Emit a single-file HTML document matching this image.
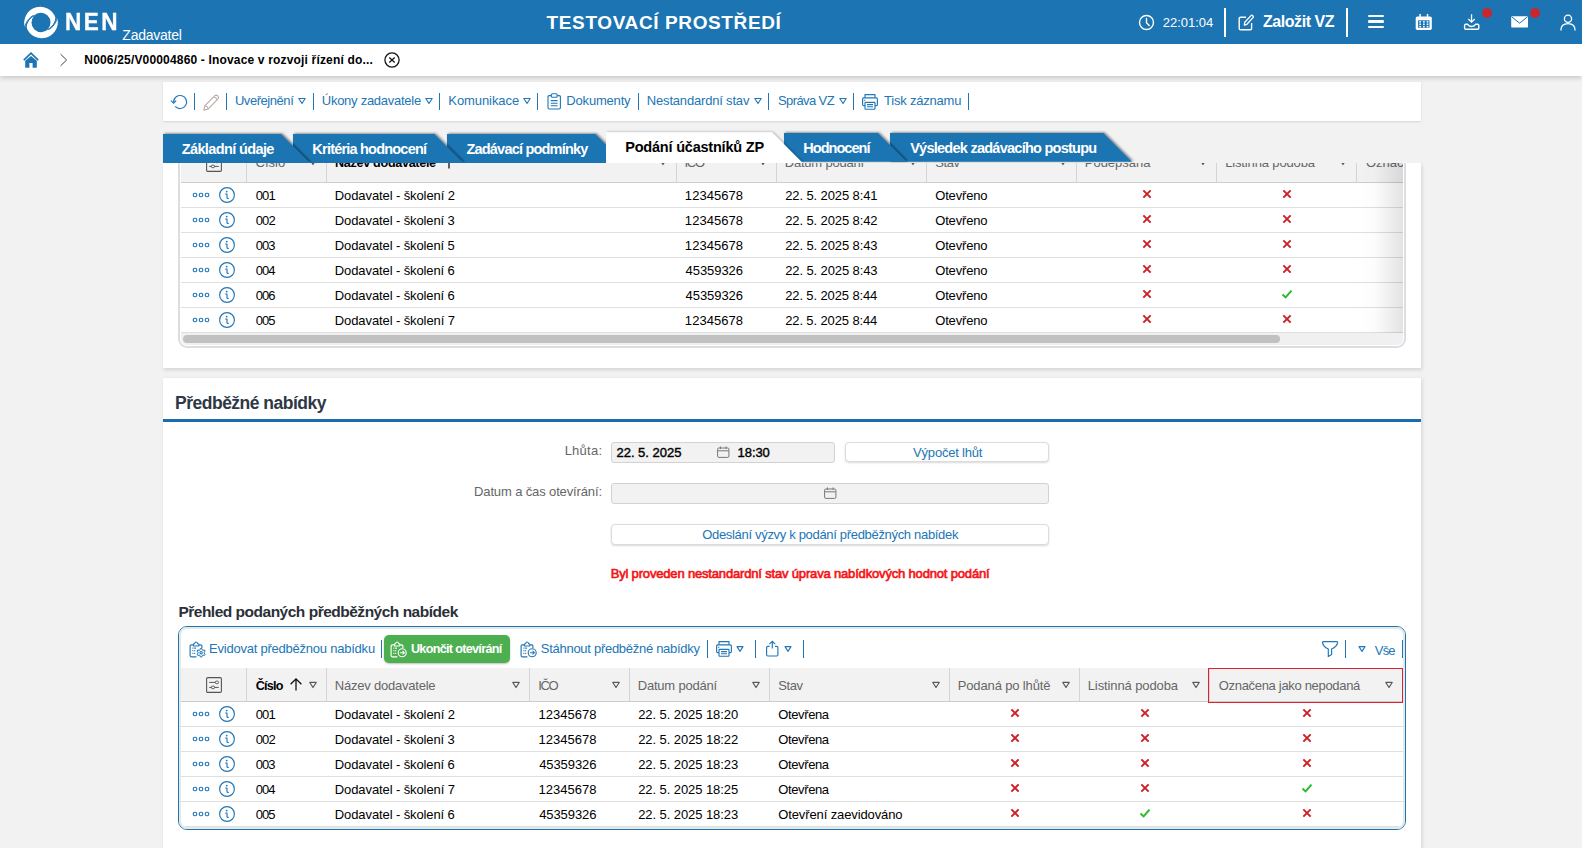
<!DOCTYPE html><html lang="cs"><head><meta charset="utf-8"><title>NEN - Zadavatel</title><style>html,body{margin:0;padding:0}body{width:1582px;height:848px;overflow:hidden;position:relative;background:#f2f2f2;font-family:"Liberation Sans", sans-serif;}
.t{position:absolute;white-space:pre;line-height:20px;}svg{overflow:visible}</style></head><body><div style="position:absolute;left:163px;top:163px;width:1258px;height:205px;background:#fff;box-shadow:1px 2px 4px rgba(0,0,0,.13);"></div>
<div style="position:absolute;left:178.2px;top:140px;width:1227.8px;height:208px;border:2.8px solid #dadde1;border-radius:9px;box-sizing:border-box;"></div>
<div style="position:absolute;left:181px;top:142px;width:1222px;height:203px;overflow:hidden;border-radius:0 0 6px 6px;"><div style="position:absolute;left:-181px;top:-142px;width:1582px;height:848px;"><div style="position:absolute;left:181px;top:146px;width:1222px;height:36px;background:#f2f2f2;"></div>
<div style="position:absolute;left:181px;top:182px;width:1222px;height:1px;background:#cdcdcd;"></div>
<div style="position:absolute;left:246px;top:146px;width:1px;height:36px;background:#d4d4d4;"></div>
<div style="position:absolute;left:326px;top:146px;width:1px;height:36px;background:#d4d4d4;"></div>
<div style="position:absolute;left:676px;top:146px;width:1px;height:36px;background:#d4d4d4;"></div>
<div style="position:absolute;left:776px;top:146px;width:1px;height:36px;background:#d4d4d4;"></div>
<div style="position:absolute;left:926px;top:146px;width:1px;height:36px;background:#d4d4d4;"></div>
<div style="position:absolute;left:1076px;top:146px;width:1px;height:36px;background:#d4d4d4;"></div>
<div style="position:absolute;left:1216px;top:146px;width:1px;height:36px;background:#d4d4d4;"></div>
<div style="position:absolute;left:1356px;top:146px;width:1px;height:36px;background:#d4d4d4;"></div>
<svg style="position:absolute;left:206px;top:156.4px;" width="16" height="16" viewBox="0 0 16 16"><rect x="0.6" y="0.6" width="14.8" height="14.8" rx="1.2" fill="none" stroke="#555" stroke-width="1.1"/><path d="M3.2 5.4 H9.3 M3.2 10.4 H5.6 M8.4 10.4 H12.8" stroke="#555" stroke-width="1" fill="none"/><ellipse cx="10.9" cy="5.4" rx="1.7" ry="1.4" fill="none" stroke="#555" stroke-width="0.9"/><ellipse cx="7" cy="10.4" rx="1.7" ry="1.4" fill="none" stroke="#555" stroke-width="0.9"/></svg>
<span class="t " style="left:255.57px;top:152px;line-height:21px;font-size:13px;color:#666;">Číslo</span>
<svg style="position:absolute;left:308px;top:157.4px;" width="10" height="10" viewBox="0 0 10 10"><path d="M1.80 2.45 L8.20 2.45 L5 7.55 Z" fill="none" stroke="#5a5a5a" stroke-width="1.2" stroke-linejoin="round"/></svg>
<span class="t " style="left:335.09px;top:153px;line-height:20px;font-size:12.6px;font-weight:700;letter-spacing:-0.310px;">Název dodavatele</span>
<svg style="position:absolute;left:658px;top:157.4px;" width="10" height="10" viewBox="0 0 10 10"><path d="M1.80 2.45 L8.20 2.45 L5 7.55 Z" fill="none" stroke="#5a5a5a" stroke-width="1.2" stroke-linejoin="round"/></svg>
<svg style="position:absolute;left:442.7px;top:155.5px;" width="12" height="13" viewBox="0 0 12 13"><path d="M6 12.5 V1 M0.6 6.3 L6 0.9 L11.4 6.3" fill="none" stroke="#111" stroke-width="1.3"/></svg>
<span class="t " style="left:684.61px;top:152px;line-height:21px;font-size:13px;color:#666;letter-spacing:-1.356px;">IČO</span>
<svg style="position:absolute;left:758px;top:157.4px;" width="10" height="10" viewBox="0 0 10 10"><path d="M1.80 2.45 L8.20 2.45 L5 7.55 Z" fill="none" stroke="#5a5a5a" stroke-width="1.2" stroke-linejoin="round"/></svg>
<span class="t " style="left:784.74px;top:152px;line-height:21px;font-size:13px;color:#666;letter-spacing:-0.206px;">Datum podání</span>
<svg style="position:absolute;left:908px;top:157.4px;" width="10" height="10" viewBox="0 0 10 10"><path d="M1.80 2.45 L8.20 2.45 L5 7.55 Z" fill="none" stroke="#5a5a5a" stroke-width="1.2" stroke-linejoin="round"/></svg>
<span class="t " style="left:935.24px;top:152px;line-height:21px;font-size:13px;color:#666;letter-spacing:-0.446px;">Stav</span>
<svg style="position:absolute;left:1058px;top:157.4px;" width="10" height="10" viewBox="0 0 10 10"><path d="M1.80 2.45 L8.20 2.45 L5 7.55 Z" fill="none" stroke="#5a5a5a" stroke-width="1.2" stroke-linejoin="round"/></svg>
<span class="t " style="left:1084.74px;top:152px;line-height:21px;font-size:13px;color:#666;">Podepsaná</span>
<svg style="position:absolute;left:1198px;top:157.4px;" width="10" height="10" viewBox="0 0 10 10"><path d="M1.80 2.45 L8.20 2.45 L5 7.55 Z" fill="none" stroke="#5a5a5a" stroke-width="1.2" stroke-linejoin="round"/></svg>
<span class="t " style="left:1225.14px;top:152px;line-height:21px;font-size:13px;color:#666;letter-spacing:-0.139px;">Listinná podoba</span>
<svg style="position:absolute;left:1338px;top:157.4px;" width="10" height="10" viewBox="0 0 10 10"><path d="M1.80 2.45 L8.20 2.45 L5 7.55 Z" fill="none" stroke="#5a5a5a" stroke-width="1.2" stroke-linejoin="round"/></svg>
<span class="t " style="left:1365.94px;top:152px;line-height:21px;font-size:13px;color:#666;">Označena jako nepodaná</span>
<div style="position:absolute;left:181px;top:207px;width:1222px;height:1px;background:#dfdfdf;"></div>
<svg style="position:absolute;left:191px;top:190.2px;" width="20" height="10" viewBox="0 0 20 10"><rect x="2.25" y="3.25" width="3.5" height="3.5" rx="1.5" fill="none" stroke="#2176b6" stroke-width="1.15"/><rect x="8.25" y="3.25" width="3.5" height="3.5" rx="1.5" fill="none" stroke="#2176b6" stroke-width="1.15"/><rect x="14.25" y="3.25" width="3.5" height="3.5" rx="1.5" fill="none" stroke="#2176b6" stroke-width="1.15"/></svg>
<svg style="position:absolute;left:218px;top:186.2px;" width="18" height="18" viewBox="0 0 18 18"><circle cx="9" cy="9" r="7.4" fill="none" stroke="#2176b6" stroke-width="1.15"/><circle cx="8.7" cy="5.6" r="0.9" fill="#2176b6"/><path d="M7.6 8 L9 8 L9 11.6 Q9 12.6 10.3 12.4" fill="none" stroke="#2176b6" stroke-width="1.15" stroke-linecap="round" stroke-linejoin="round"/></svg>
<span class="t " style="left:255.70px;top:185px;line-height:21px;font-size:13px;letter-spacing:-0.881px;">001</span>
<span class="t " style="left:334.84px;top:185px;line-height:21px;font-size:13px;letter-spacing:-0.102px;">Dodavatel - školení 2</span>
<span class="t " style="left:684.86px;top:185px;line-height:21px;font-size:13px;letter-spacing:0.046px;">12345678</span>
<span class="t " style="left:785.17px;top:185px;line-height:21px;font-size:13px;letter-spacing:-0.103px;">22. 5. 2025 8:41</span>
<span class="t " style="left:935.24px;top:185px;line-height:21px;font-size:13px;letter-spacing:-0.168px;">Otevřeno</span>
<svg style="position:absolute;left:1142.3px;top:189.2px;" width="10" height="10" viewBox="0 0 10 10"><path d="M1.35 1.35 L8.65 8.65 M8.65 1.35 L1.35 8.65" stroke="#cc2229" stroke-width="2" fill="none"/></svg>
<svg style="position:absolute;left:1282.4px;top:189.2px;" width="10" height="10" viewBox="0 0 10 10"><path d="M1.35 1.35 L8.65 8.65 M8.65 1.35 L1.35 8.65" stroke="#cc2229" stroke-width="2" fill="none"/></svg>
<div style="position:absolute;left:181px;top:232px;width:1222px;height:1px;background:#dfdfdf;"></div>
<svg style="position:absolute;left:191px;top:215.2px;" width="20" height="10" viewBox="0 0 20 10"><rect x="2.25" y="3.25" width="3.5" height="3.5" rx="1.5" fill="none" stroke="#2176b6" stroke-width="1.15"/><rect x="8.25" y="3.25" width="3.5" height="3.5" rx="1.5" fill="none" stroke="#2176b6" stroke-width="1.15"/><rect x="14.25" y="3.25" width="3.5" height="3.5" rx="1.5" fill="none" stroke="#2176b6" stroke-width="1.15"/></svg>
<svg style="position:absolute;left:218px;top:211.2px;" width="18" height="18" viewBox="0 0 18 18"><circle cx="9" cy="9" r="7.4" fill="none" stroke="#2176b6" stroke-width="1.15"/><circle cx="8.7" cy="5.6" r="0.9" fill="#2176b6"/><path d="M7.6 8 L9 8 L9 11.6 Q9 12.6 10.3 12.4" fill="none" stroke="#2176b6" stroke-width="1.15" stroke-linecap="round" stroke-linejoin="round"/></svg>
<span class="t " style="left:255.70px;top:210px;line-height:21px;font-size:13px;letter-spacing:-0.881px;">002</span>
<span class="t " style="left:334.84px;top:210px;line-height:21px;font-size:13px;letter-spacing:-0.105px;">Dodavatel - školení 3</span>
<span class="t " style="left:684.86px;top:210px;line-height:21px;font-size:13px;letter-spacing:0.046px;">12345678</span>
<span class="t " style="left:785.17px;top:210px;line-height:21px;font-size:13px;letter-spacing:-0.103px;">22. 5. 2025 8:42</span>
<span class="t " style="left:935.24px;top:210px;line-height:21px;font-size:13px;letter-spacing:-0.168px;">Otevřeno</span>
<svg style="position:absolute;left:1142.3px;top:214.2px;" width="10" height="10" viewBox="0 0 10 10"><path d="M1.35 1.35 L8.65 8.65 M8.65 1.35 L1.35 8.65" stroke="#cc2229" stroke-width="2" fill="none"/></svg>
<svg style="position:absolute;left:1282.4px;top:214.2px;" width="10" height="10" viewBox="0 0 10 10"><path d="M1.35 1.35 L8.65 8.65 M8.65 1.35 L1.35 8.65" stroke="#cc2229" stroke-width="2" fill="none"/></svg>
<div style="position:absolute;left:181px;top:257px;width:1222px;height:1px;background:#dfdfdf;"></div>
<svg style="position:absolute;left:191px;top:240.2px;" width="20" height="10" viewBox="0 0 20 10"><rect x="2.25" y="3.25" width="3.5" height="3.5" rx="1.5" fill="none" stroke="#2176b6" stroke-width="1.15"/><rect x="8.25" y="3.25" width="3.5" height="3.5" rx="1.5" fill="none" stroke="#2176b6" stroke-width="1.15"/><rect x="14.25" y="3.25" width="3.5" height="3.5" rx="1.5" fill="none" stroke="#2176b6" stroke-width="1.15"/></svg>
<svg style="position:absolute;left:218px;top:236.2px;" width="18" height="18" viewBox="0 0 18 18"><circle cx="9" cy="9" r="7.4" fill="none" stroke="#2176b6" stroke-width="1.15"/><circle cx="8.7" cy="5.6" r="0.9" fill="#2176b6"/><path d="M7.6 8 L9 8 L9 11.6 Q9 12.6 10.3 12.4" fill="none" stroke="#2176b6" stroke-width="1.15" stroke-linecap="round" stroke-linejoin="round"/></svg>
<span class="t " style="left:255.70px;top:235px;line-height:21px;font-size:13px;letter-spacing:-0.912px;">003</span>
<span class="t " style="left:334.84px;top:235px;line-height:21px;font-size:13px;letter-spacing:-0.105px;">Dodavatel - školení 5</span>
<span class="t " style="left:684.86px;top:235px;line-height:21px;font-size:13px;letter-spacing:0.046px;">12345678</span>
<span class="t " style="left:785.17px;top:235px;line-height:21px;font-size:13px;letter-spacing:-0.107px;">22. 5. 2025 8:43</span>
<span class="t " style="left:935.24px;top:235px;line-height:21px;font-size:13px;letter-spacing:-0.168px;">Otevřeno</span>
<svg style="position:absolute;left:1142.3px;top:239.2px;" width="10" height="10" viewBox="0 0 10 10"><path d="M1.35 1.35 L8.65 8.65 M8.65 1.35 L1.35 8.65" stroke="#cc2229" stroke-width="2" fill="none"/></svg>
<svg style="position:absolute;left:1282.4px;top:239.2px;" width="10" height="10" viewBox="0 0 10 10"><path d="M1.35 1.35 L8.65 8.65 M8.65 1.35 L1.35 8.65" stroke="#cc2229" stroke-width="2" fill="none"/></svg>
<div style="position:absolute;left:181px;top:282px;width:1222px;height:1px;background:#dfdfdf;"></div>
<svg style="position:absolute;left:191px;top:265.2px;" width="20" height="10" viewBox="0 0 20 10"><rect x="2.25" y="3.25" width="3.5" height="3.5" rx="1.5" fill="none" stroke="#2176b6" stroke-width="1.15"/><rect x="8.25" y="3.25" width="3.5" height="3.5" rx="1.5" fill="none" stroke="#2176b6" stroke-width="1.15"/><rect x="14.25" y="3.25" width="3.5" height="3.5" rx="1.5" fill="none" stroke="#2176b6" stroke-width="1.15"/></svg>
<svg style="position:absolute;left:218px;top:261.2px;" width="18" height="18" viewBox="0 0 18 18"><circle cx="9" cy="9" r="7.4" fill="none" stroke="#2176b6" stroke-width="1.15"/><circle cx="8.7" cy="5.6" r="0.9" fill="#2176b6"/><path d="M7.6 8 L9 8 L9 11.6 Q9 12.6 10.3 12.4" fill="none" stroke="#2176b6" stroke-width="1.15" stroke-linecap="round" stroke-linejoin="round"/></svg>
<span class="t " style="left:255.70px;top:260px;line-height:21px;font-size:13px;letter-spacing:-1.006px;">004</span>
<span class="t " style="left:334.84px;top:260px;line-height:21px;font-size:13px;letter-spacing:-0.105px;">Dodavatel - školení 6</span>
<span class="t " style="left:685.55px;top:260px;line-height:21px;font-size:13px;letter-spacing:-0.052px;">45359326</span>
<span class="t " style="left:785.17px;top:260px;line-height:21px;font-size:13px;letter-spacing:-0.107px;">22. 5. 2025 8:43</span>
<span class="t " style="left:935.24px;top:260px;line-height:21px;font-size:13px;letter-spacing:-0.168px;">Otevřeno</span>
<svg style="position:absolute;left:1142.3px;top:264.2px;" width="10" height="10" viewBox="0 0 10 10"><path d="M1.35 1.35 L8.65 8.65 M8.65 1.35 L1.35 8.65" stroke="#cc2229" stroke-width="2" fill="none"/></svg>
<svg style="position:absolute;left:1282.4px;top:264.2px;" width="10" height="10" viewBox="0 0 10 10"><path d="M1.35 1.35 L8.65 8.65 M8.65 1.35 L1.35 8.65" stroke="#cc2229" stroke-width="2" fill="none"/></svg>
<div style="position:absolute;left:181px;top:307px;width:1222px;height:1px;background:#dfdfdf;"></div>
<svg style="position:absolute;left:191px;top:290.2px;" width="20" height="10" viewBox="0 0 20 10"><rect x="2.25" y="3.25" width="3.5" height="3.5" rx="1.5" fill="none" stroke="#2176b6" stroke-width="1.15"/><rect x="8.25" y="3.25" width="3.5" height="3.5" rx="1.5" fill="none" stroke="#2176b6" stroke-width="1.15"/><rect x="14.25" y="3.25" width="3.5" height="3.5" rx="1.5" fill="none" stroke="#2176b6" stroke-width="1.15"/></svg>
<svg style="position:absolute;left:218px;top:286.2px;" width="18" height="18" viewBox="0 0 18 18"><circle cx="9" cy="9" r="7.4" fill="none" stroke="#2176b6" stroke-width="1.15"/><circle cx="8.7" cy="5.6" r="0.9" fill="#2176b6"/><path d="M7.6 8 L9 8 L9 11.6 Q9 12.6 10.3 12.4" fill="none" stroke="#2176b6" stroke-width="1.15" stroke-linecap="round" stroke-linejoin="round"/></svg>
<span class="t " style="left:255.70px;top:285px;line-height:21px;font-size:13px;letter-spacing:-0.912px;">006</span>
<span class="t " style="left:334.84px;top:285px;line-height:21px;font-size:13px;letter-spacing:-0.105px;">Dodavatel - školení 6</span>
<span class="t " style="left:685.55px;top:285px;line-height:21px;font-size:13px;letter-spacing:-0.052px;">45359326</span>
<span class="t " style="left:785.17px;top:285px;line-height:21px;font-size:13px;letter-spacing:-0.120px;">22. 5. 2025 8:44</span>
<span class="t " style="left:935.24px;top:285px;line-height:21px;font-size:13px;letter-spacing:-0.168px;">Otevřeno</span>
<svg style="position:absolute;left:1142.3px;top:289.2px;" width="10" height="10" viewBox="0 0 10 10"><path d="M1.35 1.35 L8.65 8.65 M8.65 1.35 L1.35 8.65" stroke="#cc2229" stroke-width="2" fill="none"/></svg>
<svg style="position:absolute;left:1281.4px;top:289.2px;" width="12" height="10" viewBox="0 0 12 10"><path d="M1.5 5.5 L4.6 8.4 L10.5 1.6" stroke="#2eb82e" stroke-width="2" fill="none"/></svg>
<div style="position:absolute;left:181px;top:332px;width:1222px;height:1px;background:#dfdfdf;"></div>
<svg style="position:absolute;left:191px;top:315.2px;" width="20" height="10" viewBox="0 0 20 10"><rect x="2.25" y="3.25" width="3.5" height="3.5" rx="1.5" fill="none" stroke="#2176b6" stroke-width="1.15"/><rect x="8.25" y="3.25" width="3.5" height="3.5" rx="1.5" fill="none" stroke="#2176b6" stroke-width="1.15"/><rect x="14.25" y="3.25" width="3.5" height="3.5" rx="1.5" fill="none" stroke="#2176b6" stroke-width="1.15"/></svg>
<svg style="position:absolute;left:218px;top:311.2px;" width="18" height="18" viewBox="0 0 18 18"><circle cx="9" cy="9" r="7.4" fill="none" stroke="#2176b6" stroke-width="1.15"/><circle cx="8.7" cy="5.6" r="0.9" fill="#2176b6"/><path d="M7.6 8 L9 8 L9 11.6 Q9 12.6 10.3 12.4" fill="none" stroke="#2176b6" stroke-width="1.15" stroke-linecap="round" stroke-linejoin="round"/></svg>
<span class="t " style="left:255.70px;top:310px;line-height:21px;font-size:13px;letter-spacing:-0.912px;">005</span>
<span class="t " style="left:334.84px;top:310px;line-height:21px;font-size:13px;letter-spacing:-0.102px;">Dodavatel - školení 7</span>
<span class="t " style="left:684.86px;top:310px;line-height:21px;font-size:13px;letter-spacing:0.046px;">12345678</span>
<span class="t " style="left:785.17px;top:310px;line-height:21px;font-size:13px;letter-spacing:-0.120px;">22. 5. 2025 8:44</span>
<span class="t " style="left:935.24px;top:310px;line-height:21px;font-size:13px;letter-spacing:-0.168px;">Otevřeno</span>
<svg style="position:absolute;left:1142.3px;top:314.2px;" width="10" height="10" viewBox="0 0 10 10"><path d="M1.35 1.35 L8.65 8.65 M8.65 1.35 L1.35 8.65" stroke="#cc2229" stroke-width="2" fill="none"/></svg>
<svg style="position:absolute;left:1282.4px;top:314.2px;" width="10" height="10" viewBox="0 0 10 10"><path d="M1.35 1.35 L8.65 8.65 M8.65 1.35 L1.35 8.65" stroke="#cc2229" stroke-width="2" fill="none"/></svg>
<div style="position:absolute;left:181px;top:333px;width:1222px;height:12px;background:#f0f0f0;"></div>
<div style="position:absolute;left:183px;top:335px;width:1096.6px;height:8px;background:#c1c1c1;border-radius:4px;"></div>
<div style="position:absolute;left:1355px;top:146px;width:48px;height:187px;background:linear-gradient(to right,rgba(0,0,0,0) 0%,rgba(0,0,0,0.012) 40%,rgba(0,0,0,0.11) 100%);"></div>
</div></div>
<div style="position:absolute;left:163px;top:123px;width:1258px;height:39.7px;background:#f2f2f2;"></div>
<svg style="position:absolute;left:0;top:120px;overflow:hidden" width="1582" height="43" viewBox="0 120 1582 43"><defs><filter id="ds" x="-5%" y="-20%" width="110%" height="140%"><feDropShadow dx="1.4" dy="-0.6" stdDeviation="1.3" flood-color="#000" flood-opacity="0.5"/></filter><filter id="ds2" x="-5%" y="-20%" width="110%" height="140%"><feDropShadow dx="1.2" dy="-0.4" stdDeviation="1.3" flood-color="#000" flood-opacity="0.28"/></filter></defs><polygon points="890,133 1103.3,133 1132.0,161.7 890,161.7" fill="#1c74b3" filter="url(#ds)"/><polygon points="784,133 877.9,133 906.6,161.7 784,161.7" fill="#1c74b3" filter="url(#ds)"/><polygon points="447,134 595.3,134 624.3,163 447,163" fill="#1c74b3" filter="url(#ds)"/><polygon points="293,134 434.4,134 463.4,163 293,163" fill="#1c74b3" filter="url(#ds)"/><polygon points="163,134 281.0,134 310.0,163 163,163" fill="#1c74b3" filter="url(#ds)"/><polygon points="606,132.3 772,132.3 802.7,163 606,163" fill="#fff" filter="url(#ds2)"/></svg>
<span class="t " style="left:181.73px;top:138px;line-height:22px;font-size:14.5px;font-weight:700;color:#fff;letter-spacing:-0.618px;">Základní údaje</span>
<span class="t " style="left:312.36px;top:138px;line-height:22px;font-size:14.5px;font-weight:700;color:#fff;letter-spacing:-0.792px;">Kritéria hodnocení</span>
<span class="t " style="left:466.43px;top:138px;line-height:22px;font-size:14.5px;font-weight:700;color:#fff;letter-spacing:-0.789px;">Zadávací podmínky</span>
<span class="t " style="left:625.26px;top:136px;line-height:22px;font-size:14.5px;font-weight:700;letter-spacing:-0.210px;">Podání účastníků ZP</span>
<span class="t " style="left:803.26px;top:137px;line-height:22px;font-size:14.5px;font-weight:700;color:#fff;letter-spacing:-0.959px;">Hodnocení</span>
<span class="t " style="left:910.14px;top:137px;line-height:22px;font-size:14.5px;font-weight:700;color:#fff;letter-spacing:-0.739px;">Výsledek zadávacího postupu</span>
<div style="position:absolute;left:163px;top:82px;width:1258px;height:39px;background:#fff;box-shadow:0 1px 2px rgba(0,0,0,.12);"></div>
<svg style="position:absolute;left:170px;top:93px;" width="18" height="18" viewBox="0 0 18 18"><path d="M3.6 9 A6.5 6.5 0 1 1 5.2 13.3" fill="none" stroke="#2176b6" stroke-width="1.2"/><path d="M1 7.6 L3.6 10.2 L6.2 7.6" fill="none" stroke="#2176b6" stroke-width="1.2"/></svg>
<svg style="position:absolute;left:202.5px;top:93.5px;" width="18" height="17" viewBox="0 0 18 17"><path d="M0.8 16.2 L2 11.6 L11.9 1.7 Q13.2 0.5 14.8 1.9 Q16.2 3.5 15 4.8 L5.3 14.9 Z M2 11.6 Q4.4 12.2 5.3 14.9 M10.9 2.7 Q13.4 3.4 14 6" fill="none" stroke="#b7aaa6" stroke-width="1.05" stroke-linejoin="round"/></svg>
<span class="t " style="left:234.90px;top:90px;line-height:21px;font-size:13px;color:#2176b6;letter-spacing:-0.446px;">Uveřejnění</span>
<svg style="position:absolute;left:297.1px;top:96.0px;" width="10" height="10" viewBox="0 0 10 10"><path d="M1.80 2.45 L8.20 2.45 L5 7.55 Z" fill="none" stroke="#2176b6" stroke-width="1.1" stroke-linejoin="round"/></svg>
<span class="t " style="left:321.80px;top:90px;line-height:21px;font-size:13px;color:#2176b6;letter-spacing:-0.267px;">Úkony zadavatele</span>
<svg style="position:absolute;left:423.9px;top:96.0px;" width="10" height="10" viewBox="0 0 10 10"><path d="M1.80 2.45 L8.20 2.45 L5 7.55 Z" fill="none" stroke="#2176b6" stroke-width="1.1" stroke-linejoin="round"/></svg>
<span class="t " style="left:448.34px;top:90px;line-height:21px;font-size:13px;color:#2176b6;letter-spacing:-0.082px;">Komunikace</span>
<svg style="position:absolute;left:521.7px;top:96.0px;" width="10" height="10" viewBox="0 0 10 10"><path d="M1.80 2.45 L8.20 2.45 L5 7.55 Z" fill="none" stroke="#2176b6" stroke-width="1.1" stroke-linejoin="round"/></svg>
<span class="t " style="left:566.34px;top:90px;line-height:21px;font-size:13px;color:#2176b6;letter-spacing:-0.186px;">Dokumenty</span>
<span class="t " style="left:646.84px;top:90px;line-height:21px;font-size:13px;color:#2176b6;letter-spacing:-0.184px;">Nestandardní stav</span>
<svg style="position:absolute;left:752.6px;top:96.0px;" width="10" height="10" viewBox="0 0 10 10"><path d="M1.80 2.45 L8.20 2.45 L5 7.55 Z" fill="none" stroke="#2176b6" stroke-width="1.1" stroke-linejoin="round"/></svg>
<span class="t " style="left:777.94px;top:90px;line-height:21px;font-size:13px;color:#2176b6;letter-spacing:-0.588px;">Správa VZ</span>
<svg style="position:absolute;left:837.7px;top:96.0px;" width="10" height="10" viewBox="0 0 10 10"><path d="M1.80 2.45 L8.20 2.45 L5 7.55 Z" fill="none" stroke="#2176b6" stroke-width="1.1" stroke-linejoin="round"/></svg>
<span class="t " style="left:883.95px;top:90px;line-height:21px;font-size:13px;color:#2176b6;letter-spacing:-0.202px;">Tisk záznamu</span>
<div style="position:absolute;left:193.9px;top:93px;width:1.4px;height:16.5px;background:#2176b6;"></div>
<div style="position:absolute;left:225.60000000000002px;top:93px;width:1.4px;height:16.5px;background:#2176b6;"></div>
<div style="position:absolute;left:312.7px;top:93px;width:1.4px;height:16.5px;background:#2176b6;"></div>
<div style="position:absolute;left:438.7px;top:93px;width:1.4px;height:16.5px;background:#2176b6;"></div>
<div style="position:absolute;left:536.9px;top:93px;width:1.4px;height:16.5px;background:#2176b6;"></div>
<div style="position:absolute;left:637.9px;top:93px;width:1.4px;height:16.5px;background:#2176b6;"></div>
<div style="position:absolute;left:767.9px;top:93px;width:1.4px;height:16.5px;background:#2176b6;"></div>
<div style="position:absolute;left:852.6999999999999px;top:93px;width:1.4px;height:16.5px;background:#2176b6;"></div>
<div style="position:absolute;left:967.9px;top:93px;width:1.4px;height:16.5px;background:#2176b6;"></div>
<svg style="position:absolute;left:547px;top:93px;" width="15" height="17" viewBox="0 0 15 17"><path d="M4.2 2.6 H2.2 Q1 2.6 1 3.8 V14.8 Q1 16 2.2 16 H12.2 Q13.4 16 13.4 14.8 V3.8 Q13.4 2.6 12.2 2.6 H10.2" fill="none" stroke="#2176b6" stroke-width="1.1"/><rect x="4.3" y="0.8" width="5.8" height="3.4" rx="1" fill="none" stroke="#2176b6" stroke-width="1.1"/><path d="M3.8 7.6 H10.6 M3.8 10.2 H10.6 M3.8 12.8 H10.6" stroke="#2176b6" stroke-width="1.1"/></svg>
<svg style="position:absolute;left:862.4px;top:93.6px;" width="16" height="16" viewBox="0 0 16 16"><path d="M3 3.8 V0.6 H13 V3.8" fill="none" stroke="#2176b6" stroke-width="1.15" stroke-linejoin="round"/><path d="M3 11.6 H1.8 Q0.6 11.6 0.6 10.4 V5 Q0.6 3.8 1.8 3.8 H14.2 Q15.4 3.8 15.4 5 V10.4 Q15.4 11.6 14.2 11.6 H13" fill="none" stroke="#2176b6" stroke-width="1.15"/><rect x="3" y="8.4" width="10" height="6.8" rx="0.6" fill="#fff" stroke="#2176b6" stroke-width="1.15"/><path d="M5 10.6 H11 M5 12.7 H11 M1.9 6.2 H3.3" stroke="#2176b6" stroke-width="1.05"/></svg>
<div style="position:absolute;left:163px;top:378px;width:1258px;height:480px;background:#fff;box-shadow:1px 1px 4px rgba(0,0,0,.13);"></div>
<span class="t " style="left:175.08px;top:390px;line-height:26px;font-size:17.5px;font-weight:700;color:#2e3846;letter-spacing:-0.507px;">Předběžné nabídky</span>
<div style="position:absolute;left:163px;top:419px;width:1258px;height:3px;background:#1a6eb0;"></div>
<span class="t " style="left:564.64px;top:440px;line-height:21px;font-size:13px;color:#666;letter-spacing:0.253px;">Lhůta:</span>
<div style="position:absolute;left:611px;top:442px;width:224px;height:21px;background:#f2f2f2;border:1px solid #d2d2d2;border-radius:3px;box-sizing:border-box;"></div>
<span class="t " style="left:616.47px;top:442px;line-height:21px;font-size:13px;letter-spacing:-0.007px;-webkit-text-stroke:0.4px #000;">22. 5. 2025</span>
<svg style="position:absolute;left:716.6px;top:446px;" width="12.5" height="12" viewBox="0 0 12.5 12"><rect x="0.6" y="2" width="11.3" height="9.4" rx="1.2" fill="none" stroke="#777" stroke-width="1"/><path d="M0.6 4.8 H11.9 M3.4 0.4 V3 M9.1 0.4 V3" stroke="#777" stroke-width="1" fill="none"/></svg>
<span class="t " style="left:737.56px;top:442px;line-height:21px;font-size:13px;letter-spacing:-0.056px;-webkit-text-stroke:0.4px #000;">18:30</span>
<div style="position:absolute;left:845px;top:442px;width:204px;height:20px;background:#fff;border:1px solid #dcdcdc;border-radius:4px;box-sizing:border-box;box-shadow:0 1px 2px rgba(0,0,0,.15);"></div>
<span class="t " style="left:913.10px;top:442px;line-height:21px;font-size:13px;color:#2176b6;letter-spacing:-0.200px;">Výpočet lhůt</span>
<span class="t " style="left:474.04px;top:481px;line-height:21px;font-size:13px;color:#666;letter-spacing:-0.132px;">Datum a čas otevírání:</span>
<div style="position:absolute;left:611px;top:483px;width:438px;height:21px;background:#f2f2f2;border:1px solid #d2d2d2;border-radius:3px;box-sizing:border-box;"></div>
<svg style="position:absolute;left:823.7px;top:487px;" width="12.5" height="12" viewBox="0 0 12.5 12"><rect x="0.6" y="2" width="11.3" height="9.4" rx="1.2" fill="none" stroke="#777" stroke-width="1"/><path d="M0.6 4.8 H11.9 M3.4 0.4 V3 M9.1 0.4 V3" stroke="#777" stroke-width="1" fill="none"/></svg>
<div style="position:absolute;left:611px;top:524px;width:438px;height:21px;background:#fff;border:1px solid #dcdcdc;border-radius:4px;box-sizing:border-box;box-shadow:0 1px 2px rgba(0,0,0,.15);"></div>
<span class="t " style="left:702.24px;top:524px;line-height:21px;font-size:13px;color:#2176b6;letter-spacing:-0.318px;">Odeslání výzvy k podání předběžných nabídek</span>
<span class="t " style="left:610.64px;top:563px;line-height:21px;font-size:13px;color:#f51414;letter-spacing:-0.170px;-webkit-text-stroke:0.65px #f51414;">Byl proveden nestandardní stav úprava nabídkových hodnot podání</span>
<span class="t " style="left:178.40px;top:600px;line-height:23px;font-size:15.5px;font-weight:700;color:#2a2f38;letter-spacing:-0.494px;">Přehled podaných předběžných nabídek</span>
<div style="position:absolute;left:178px;top:626px;width:1228px;height:204px;border:1px solid #1c74b3;border-radius:9px;box-sizing:border-box;"></div>
<div style="position:absolute;left:179px;top:627px;width:1226px;height:202px;border:2px solid #e6e8ea;border-radius:8px;box-sizing:border-box;"></div>
<svg style="position:absolute;left:188.5px;top:640.6px;" width="17" height="17" viewBox="0 0 17 17"><path d="M4.4 3.9 H2.3 Q1.1 3.9 1.1 5.1 V14.6 Q1.1 15.8 2.3 15.8 H7.4 M9.8 3.9 H11.7 Q12.9 3.9 12.9 5.1 V6.9" fill="none" stroke="#2176b6" stroke-width="1.15"/><path d="M4.4 5 V3.4 Q4.4 2.8 5 2.8 H5.6 Q5.9 1 7.1 1 Q8.3 1 8.6 2.8 H9.2 Q9.8 2.8 9.8 3.4 V5 Z" fill="none" stroke="#2176b6" stroke-width="1.05" stroke-linejoin="round"/><path d="M3.4 7 H4.4 M5.2 7 H7 M3.4 9.6 H4.4 M5.2 9.6 H6.2 M3.4 12.3 H4.4 M5.2 12.3 H6.2" stroke="#2176b6" stroke-width="1.25"/><path d="M13.18 8.90 L12.92 7.48 L11.28 7.48 L11.02 8.90 L10.21 9.37 L8.85 8.88 L8.03 10.30 L9.14 11.23 L9.14 12.17 L8.03 13.10 L8.85 14.52 L10.21 14.03 L11.02 14.50 L11.28 15.92 L12.92 15.92 L13.18 14.50 L13.99 14.03 L15.35 14.52 L16.17 13.10 L15.06 12.17 L15.06 11.23 L16.17 10.30 L15.35 8.88 L13.99 9.37 Z" fill="#fff" stroke="#2176b6" stroke-width="1" stroke-linejoin="round"/><circle cx="12.1" cy="11.7" r="1.15" fill="none" stroke="#2176b6" stroke-width="1.1"/></svg>
<span class="t " style="left:209.04px;top:638px;line-height:21px;font-size:13px;color:#2176b6;letter-spacing:-0.228px;">Evidovat předběžnou nabídku</span>
<div style="position:absolute;left:380.7px;top:640.4px;width:1.4px;height:17.600000000000023px;background:#2176b6;"></div>
<div style="position:absolute;left:383.7px;top:635.3px;width:126.3px;height:27.5px;background:#4caf50;border-radius:5px;box-shadow:0 1px 2px rgba(0,0,0,.25);"></div>
<svg style="position:absolute;left:390.2px;top:640.6px;" width="17" height="17" viewBox="0 0 17 17"><path d="M4.4 3.9 H2.3 Q1.1 3.9 1.1 5.1 V14.6 Q1.1 15.8 2.3 15.8 H7.4 M9.8 3.9 H11.7 Q12.9 3.9 12.9 5.1 V6.9" fill="none" stroke="#fff" stroke-width="1.15"/><path d="M4.4 5 V3.4 Q4.4 2.8 5 2.8 H5.6 Q5.9 1 7.1 1 Q8.3 1 8.6 2.8 H9.2 Q9.8 2.8 9.8 3.4 V5 Z" fill="none" stroke="#fff" stroke-width="1.05" stroke-linejoin="round"/><path d="M3.4 7 H4.4 M5.2 7 H7 M3.4 9.6 H4.4 M5.2 9.6 H6.2 M3.4 12.3 H4.4 M5.2 12.3 H6.2" stroke="#fff" stroke-width="1.25"/><circle cx="12.2" cy="11.7" r="4" fill="#4caf50" stroke="#fff" stroke-width="1.1"/><path d="M10 11.7 H14.2 M12.6 9.9 L14.4 11.7 L12.6 13.5" fill="none" stroke="#fff" stroke-width="1.05"/></svg>
<span class="t " style="left:410.95px;top:639px;line-height:20px;font-size:12.6px;font-weight:700;color:#fff;letter-spacing:-0.679px;">Ukončit otevírání</span>
<svg style="position:absolute;left:519.6px;top:640.6px;" width="17" height="17" viewBox="0 0 17 17"><path d="M4.4 3.9 H2.3 Q1.1 3.9 1.1 5.1 V14.6 Q1.1 15.8 2.3 15.8 H7.4 M9.8 3.9 H11.7 Q12.9 3.9 12.9 5.1 V6.9" fill="none" stroke="#2176b6" stroke-width="1.15"/><path d="M4.4 5 V3.4 Q4.4 2.8 5 2.8 H5.6 Q5.9 1 7.1 1 Q8.3 1 8.6 2.8 H9.2 Q9.8 2.8 9.8 3.4 V5 Z" fill="none" stroke="#2176b6" stroke-width="1.05" stroke-linejoin="round"/><path d="M3.4 7 H4.4 M5.2 7 H7 M3.4 9.6 H4.4 M5.2 9.6 H6.2 M3.4 12.3 H4.4 M5.2 12.3 H6.2" stroke="#2176b6" stroke-width="1.25"/><circle cx="12.2" cy="11.7" r="4" fill="#fff" stroke="#2176b6" stroke-width="1.1"/><path d="M10 11.7 H14.2 M12.6 9.9 L14.4 11.7 L12.6 13.5" fill="none" stroke="#2176b6" stroke-width="1.05"/></svg>
<span class="t " style="left:540.84px;top:638px;line-height:21px;font-size:13px;color:#2176b6;letter-spacing:-0.283px;">Stáhnout předběžné nabídky</span>
<div style="position:absolute;left:706.8px;top:640px;width:1.4px;height:18px;background:#2176b6;"></div>
<svg style="position:absolute;left:716.3px;top:641.1px;" width="16" height="16" viewBox="0 0 16 16"><path d="M3 3.8 V0.6 H13 V3.8" fill="none" stroke="#2176b6" stroke-width="1.15" stroke-linejoin="round"/><path d="M3 11.6 H1.8 Q0.6 11.6 0.6 10.4 V5 Q0.6 3.8 1.8 3.8 H14.2 Q15.4 3.8 15.4 5 V10.4 Q15.4 11.6 14.2 11.6 H13" fill="none" stroke="#2176b6" stroke-width="1.15"/><rect x="3" y="8.4" width="10" height="6.8" rx="0.6" fill="#fff" stroke="#2176b6" stroke-width="1.15"/><path d="M5 10.6 H11 M5 12.7 H11 M1.9 6.2 H3.3" stroke="#2176b6" stroke-width="1.05"/></svg>
<svg style="position:absolute;left:735px;top:644.1px;" width="10" height="10" viewBox="0 0 10 10"><path d="M1.99 2.60 L8.01 2.60 L5 7.40 Z" fill="none" stroke="#2176b6" stroke-width="1.1" stroke-linejoin="round"/></svg>
<div style="position:absolute;left:754.8px;top:640px;width:1.4px;height:18px;background:#2176b6;"></div>
<svg style="position:absolute;left:766.1px;top:641.3px;" width="12.5" height="15.6" viewBox="0 0 12.5 15.6"><path d="M3.6 5.4 H1.8 Q0.6 5.4 0.6 6.6 V13.8 Q0.6 15 1.8 15 H10.7 Q11.9 15 11.9 13.8 V6.6 Q11.9 5.4 10.7 5.4 H8.9" fill="none" stroke="#2176b6" stroke-width="1.15"/><path d="M6.3 7.6 V0.7 M3.4 3.2 L6.3 0.4 L9.2 3.2" fill="none" stroke="#2176b6" stroke-width="1.15"/></svg>
<svg style="position:absolute;left:782.8px;top:644.1px;" width="10" height="10" viewBox="0 0 10 10"><path d="M1.99 2.60 L8.01 2.60 L5 7.40 Z" fill="none" stroke="#2176b6" stroke-width="1.1" stroke-linejoin="round"/></svg>
<div style="position:absolute;left:802.6999999999999px;top:640px;width:1.4px;height:18px;background:#2176b6;"></div>
<svg style="position:absolute;left:1321.8px;top:640.9px;" width="17" height="17" viewBox="0 0 17 17"><path d="M1.2 0.6 H15 Q15.8 0.6 15.7 1.4 Q15 5.6 9.6 8 V13.6 L6.3 15.6 V8 Q1 5.6 0.5 1.4 Q0.4 0.6 1.2 0.6 Z" fill="none" stroke="#2176b6" stroke-width="1.15" stroke-linejoin="round"/></svg>
<div style="position:absolute;left:1344.8px;top:640.2px;width:1.4px;height:17.59999999999991px;background:#2176b6;"></div>
<svg style="position:absolute;left:1356.8px;top:644px;" width="10" height="10" viewBox="0 0 10 10"><path d="M1.99 2.60 L8.01 2.60 L5 7.40 Z" fill="none" stroke="#2176b6" stroke-width="1.1" stroke-linejoin="round"/></svg>
<span class="t " style="left:1374.80px;top:640px;line-height:21px;font-size:13px;color:#2176b6;letter-spacing:-0.837px;">Vše</span>
<div style="position:absolute;left:1401.8000000000002px;top:640.2px;width:1.2px;height:17.59999999999991px;background:#2176b6;"></div>
<div style="position:absolute;left:181px;top:629px;width:1222px;height:198px;overflow:hidden;border-radius:6px;"><div style="position:absolute;left:-181px;top:-629px;width:1582px;height:848px;"><div style="position:absolute;left:181px;top:668.3px;width:1222px;height:32.7px;background:#f2f2f2;"></div>
<div style="position:absolute;left:181px;top:701.0px;width:1222px;height:1px;background:#cdcdcd;"></div>
<div style="position:absolute;left:246px;top:668.3px;width:1px;height:32.7px;background:#d4d4d4;"></div>
<div style="position:absolute;left:326px;top:668.3px;width:1px;height:32.7px;background:#d4d4d4;"></div>
<div style="position:absolute;left:529px;top:668.3px;width:1px;height:32.7px;background:#d4d4d4;"></div>
<div style="position:absolute;left:629px;top:668.3px;width:1px;height:32.7px;background:#d4d4d4;"></div>
<div style="position:absolute;left:769px;top:668.3px;width:1px;height:32.7px;background:#d4d4d4;"></div>
<div style="position:absolute;left:949px;top:668.3px;width:1px;height:32.7px;background:#d4d4d4;"></div>
<div style="position:absolute;left:1079px;top:668.3px;width:1px;height:32.7px;background:#d4d4d4;"></div>
<div style="position:absolute;left:1209px;top:668.3px;width:1px;height:32.7px;background:#d4d4d4;"></div>
<svg style="position:absolute;left:206px;top:677.3px;" width="16" height="16" viewBox="0 0 16 16"><rect x="0.6" y="0.6" width="14.8" height="14.8" rx="1.2" fill="none" stroke="#555" stroke-width="1.1"/><path d="M3.2 5.4 H9.3 M3.2 10.4 H5.6 M8.4 10.4 H12.8" stroke="#555" stroke-width="1" fill="none"/><ellipse cx="10.9" cy="5.4" rx="1.7" ry="1.4" fill="none" stroke="#555" stroke-width="0.9"/><ellipse cx="7" cy="10.4" rx="1.7" ry="1.4" fill="none" stroke="#555" stroke-width="0.9"/></svg>
<span class="t " style="left:255.70px;top:676px;line-height:20px;font-size:12.6px;font-weight:700;letter-spacing:-0.744px;">Číslo</span>
<svg style="position:absolute;left:308px;top:680.2px;" width="10" height="10" viewBox="0 0 10 10"><path d="M1.80 2.45 L8.20 2.45 L5 7.55 Z" fill="none" stroke="#5a5a5a" stroke-width="1.2" stroke-linejoin="round"/></svg>
<svg style="position:absolute;left:289.7px;top:678.4000000000001px;" width="12" height="13" viewBox="0 0 12 13"><path d="M6 12.5 V1 M0.6 6.3 L6 0.9 L11.4 6.3" fill="none" stroke="#111" stroke-width="1.3"/></svg>
<span class="t " style="left:334.84px;top:675px;line-height:21px;font-size:13px;color:#666;letter-spacing:-0.220px;">Název dodavatele</span>
<svg style="position:absolute;left:511px;top:680.2px;" width="10" height="10" viewBox="0 0 10 10"><path d="M1.80 2.45 L8.20 2.45 L5 7.55 Z" fill="none" stroke="#5a5a5a" stroke-width="1.2" stroke-linejoin="round"/></svg>
<span class="t " style="left:538.21px;top:675px;line-height:21px;font-size:13px;color:#666;letter-spacing:-1.356px;">IČO</span>
<svg style="position:absolute;left:611px;top:680.2px;" width="10" height="10" viewBox="0 0 10 10"><path d="M1.80 2.45 L8.20 2.45 L5 7.55 Z" fill="none" stroke="#5a5a5a" stroke-width="1.2" stroke-linejoin="round"/></svg>
<span class="t " style="left:637.74px;top:675px;line-height:21px;font-size:13px;color:#666;letter-spacing:-0.206px;">Datum podání</span>
<svg style="position:absolute;left:751px;top:680.2px;" width="10" height="10" viewBox="0 0 10 10"><path d="M1.80 2.45 L8.20 2.45 L5 7.55 Z" fill="none" stroke="#5a5a5a" stroke-width="1.2" stroke-linejoin="round"/></svg>
<span class="t " style="left:778.24px;top:675px;line-height:21px;font-size:13px;color:#666;letter-spacing:-0.446px;">Stav</span>
<svg style="position:absolute;left:931px;top:680.2px;" width="10" height="10" viewBox="0 0 10 10"><path d="M1.80 2.45 L8.20 2.45 L5 7.55 Z" fill="none" stroke="#5a5a5a" stroke-width="1.2" stroke-linejoin="round"/></svg>
<span class="t " style="left:957.74px;top:675px;line-height:21px;font-size:13px;color:#666;letter-spacing:-0.137px;">Podaná po lhůtě</span>
<svg style="position:absolute;left:1061px;top:680.2px;" width="10" height="10" viewBox="0 0 10 10"><path d="M1.80 2.45 L8.20 2.45 L5 7.55 Z" fill="none" stroke="#5a5a5a" stroke-width="1.2" stroke-linejoin="round"/></svg>
<span class="t " style="left:1087.74px;top:675px;line-height:21px;font-size:13px;color:#666;letter-spacing:-0.111px;">Listinná podoba</span>
<svg style="position:absolute;left:1191px;top:680.2px;" width="10" height="10" viewBox="0 0 10 10"><path d="M1.80 2.45 L8.20 2.45 L5 7.55 Z" fill="none" stroke="#5a5a5a" stroke-width="1.2" stroke-linejoin="round"/></svg>
<span class="t " style="left:1218.84px;top:675px;line-height:21px;font-size:13px;color:#666;letter-spacing:-0.320px;">Označena jako nepodaná</span>
<svg style="position:absolute;left:1384px;top:680.2px;" width="10" height="10" viewBox="0 0 10 10"><path d="M1.80 2.45 L8.20 2.45 L5 7.55 Z" fill="none" stroke="#5a5a5a" stroke-width="1.2" stroke-linejoin="round"/></svg>
<div style="position:absolute;left:181px;top:726px;width:1222px;height:1px;background:#dfdfdf;"></div>
<svg style="position:absolute;left:191px;top:709.2px;" width="20" height="10" viewBox="0 0 20 10"><rect x="2.25" y="3.25" width="3.5" height="3.5" rx="1.5" fill="none" stroke="#2176b6" stroke-width="1.15"/><rect x="8.25" y="3.25" width="3.5" height="3.5" rx="1.5" fill="none" stroke="#2176b6" stroke-width="1.15"/><rect x="14.25" y="3.25" width="3.5" height="3.5" rx="1.5" fill="none" stroke="#2176b6" stroke-width="1.15"/></svg>
<svg style="position:absolute;left:218px;top:705.2px;" width="18" height="18" viewBox="0 0 18 18"><circle cx="9" cy="9" r="7.4" fill="none" stroke="#2176b6" stroke-width="1.15"/><circle cx="8.7" cy="5.6" r="0.9" fill="#2176b6"/><path d="M7.6 8 L9 8 L9 11.6 Q9 12.6 10.3 12.4" fill="none" stroke="#2176b6" stroke-width="1.15" stroke-linecap="round" stroke-linejoin="round"/></svg>
<span class="t " style="left:255.70px;top:704px;line-height:21px;font-size:13px;letter-spacing:-0.881px;">001</span>
<span class="t " style="left:334.84px;top:704px;line-height:21px;font-size:13px;letter-spacing:-0.102px;">Dodavatel - školení 2</span>
<span class="t " style="left:538.46px;top:704px;line-height:21px;font-size:13px;letter-spacing:0.018px;">12345678</span>
<span class="t " style="left:638.17px;top:704px;line-height:21px;font-size:13px;letter-spacing:-0.077px;">22. 5. 2025 18:20</span>
<span class="t " style="left:778.24px;top:704px;line-height:21px;font-size:13px;letter-spacing:-0.377px;">Otevřena</span>
<svg style="position:absolute;left:1010.1px;top:708.2px;" width="10" height="10" viewBox="0 0 10 10"><path d="M1.35 1.35 L8.65 8.65 M8.65 1.35 L1.35 8.65" stroke="#cc2229" stroke-width="2" fill="none"/></svg>
<svg style="position:absolute;left:1140.2px;top:708.2px;" width="10" height="10" viewBox="0 0 10 10"><path d="M1.35 1.35 L8.65 8.65 M8.65 1.35 L1.35 8.65" stroke="#cc2229" stroke-width="2" fill="none"/></svg>
<svg style="position:absolute;left:1301.9px;top:708.2px;" width="10" height="10" viewBox="0 0 10 10"><path d="M1.35 1.35 L8.65 8.65 M8.65 1.35 L1.35 8.65" stroke="#cc2229" stroke-width="2" fill="none"/></svg>
<div style="position:absolute;left:181px;top:751px;width:1222px;height:1px;background:#dfdfdf;"></div>
<svg style="position:absolute;left:191px;top:734.2px;" width="20" height="10" viewBox="0 0 20 10"><rect x="2.25" y="3.25" width="3.5" height="3.5" rx="1.5" fill="none" stroke="#2176b6" stroke-width="1.15"/><rect x="8.25" y="3.25" width="3.5" height="3.5" rx="1.5" fill="none" stroke="#2176b6" stroke-width="1.15"/><rect x="14.25" y="3.25" width="3.5" height="3.5" rx="1.5" fill="none" stroke="#2176b6" stroke-width="1.15"/></svg>
<svg style="position:absolute;left:218px;top:730.2px;" width="18" height="18" viewBox="0 0 18 18"><circle cx="9" cy="9" r="7.4" fill="none" stroke="#2176b6" stroke-width="1.15"/><circle cx="8.7" cy="5.6" r="0.9" fill="#2176b6"/><path d="M7.6 8 L9 8 L9 11.6 Q9 12.6 10.3 12.4" fill="none" stroke="#2176b6" stroke-width="1.15" stroke-linecap="round" stroke-linejoin="round"/></svg>
<span class="t " style="left:255.70px;top:729px;line-height:21px;font-size:13px;letter-spacing:-0.881px;">002</span>
<span class="t " style="left:334.84px;top:729px;line-height:21px;font-size:13px;letter-spacing:-0.105px;">Dodavatel - školení 3</span>
<span class="t " style="left:538.46px;top:729px;line-height:21px;font-size:13px;letter-spacing:0.018px;">12345678</span>
<span class="t " style="left:638.17px;top:729px;line-height:21px;font-size:13px;letter-spacing:-0.069px;">22. 5. 2025 18:22</span>
<span class="t " style="left:778.24px;top:729px;line-height:21px;font-size:13px;letter-spacing:-0.377px;">Otevřena</span>
<svg style="position:absolute;left:1010.1px;top:733.2px;" width="10" height="10" viewBox="0 0 10 10"><path d="M1.35 1.35 L8.65 8.65 M8.65 1.35 L1.35 8.65" stroke="#cc2229" stroke-width="2" fill="none"/></svg>
<svg style="position:absolute;left:1140.2px;top:733.2px;" width="10" height="10" viewBox="0 0 10 10"><path d="M1.35 1.35 L8.65 8.65 M8.65 1.35 L1.35 8.65" stroke="#cc2229" stroke-width="2" fill="none"/></svg>
<svg style="position:absolute;left:1301.9px;top:733.2px;" width="10" height="10" viewBox="0 0 10 10"><path d="M1.35 1.35 L8.65 8.65 M8.65 1.35 L1.35 8.65" stroke="#cc2229" stroke-width="2" fill="none"/></svg>
<div style="position:absolute;left:181px;top:776px;width:1222px;height:1px;background:#dfdfdf;"></div>
<svg style="position:absolute;left:191px;top:759.2px;" width="20" height="10" viewBox="0 0 20 10"><rect x="2.25" y="3.25" width="3.5" height="3.5" rx="1.5" fill="none" stroke="#2176b6" stroke-width="1.15"/><rect x="8.25" y="3.25" width="3.5" height="3.5" rx="1.5" fill="none" stroke="#2176b6" stroke-width="1.15"/><rect x="14.25" y="3.25" width="3.5" height="3.5" rx="1.5" fill="none" stroke="#2176b6" stroke-width="1.15"/></svg>
<svg style="position:absolute;left:218px;top:755.2px;" width="18" height="18" viewBox="0 0 18 18"><circle cx="9" cy="9" r="7.4" fill="none" stroke="#2176b6" stroke-width="1.15"/><circle cx="8.7" cy="5.6" r="0.9" fill="#2176b6"/><path d="M7.6 8 L9 8 L9 11.6 Q9 12.6 10.3 12.4" fill="none" stroke="#2176b6" stroke-width="1.15" stroke-linecap="round" stroke-linejoin="round"/></svg>
<span class="t " style="left:255.70px;top:754px;line-height:21px;font-size:13px;letter-spacing:-0.912px;">003</span>
<span class="t " style="left:334.84px;top:754px;line-height:21px;font-size:13px;letter-spacing:-0.105px;">Dodavatel - školení 6</span>
<span class="t " style="left:539.15px;top:754px;line-height:21px;font-size:13px;letter-spacing:-0.080px;">45359326</span>
<span class="t " style="left:638.17px;top:754px;line-height:21px;font-size:13px;letter-spacing:-0.073px;">22. 5. 2025 18:23</span>
<span class="t " style="left:778.24px;top:754px;line-height:21px;font-size:13px;letter-spacing:-0.377px;">Otevřena</span>
<svg style="position:absolute;left:1010.1px;top:758.2px;" width="10" height="10" viewBox="0 0 10 10"><path d="M1.35 1.35 L8.65 8.65 M8.65 1.35 L1.35 8.65" stroke="#cc2229" stroke-width="2" fill="none"/></svg>
<svg style="position:absolute;left:1140.2px;top:758.2px;" width="10" height="10" viewBox="0 0 10 10"><path d="M1.35 1.35 L8.65 8.65 M8.65 1.35 L1.35 8.65" stroke="#cc2229" stroke-width="2" fill="none"/></svg>
<svg style="position:absolute;left:1301.9px;top:758.2px;" width="10" height="10" viewBox="0 0 10 10"><path d="M1.35 1.35 L8.65 8.65 M8.65 1.35 L1.35 8.65" stroke="#cc2229" stroke-width="2" fill="none"/></svg>
<div style="position:absolute;left:181px;top:801px;width:1222px;height:1px;background:#dfdfdf;"></div>
<svg style="position:absolute;left:191px;top:784.2px;" width="20" height="10" viewBox="0 0 20 10"><rect x="2.25" y="3.25" width="3.5" height="3.5" rx="1.5" fill="none" stroke="#2176b6" stroke-width="1.15"/><rect x="8.25" y="3.25" width="3.5" height="3.5" rx="1.5" fill="none" stroke="#2176b6" stroke-width="1.15"/><rect x="14.25" y="3.25" width="3.5" height="3.5" rx="1.5" fill="none" stroke="#2176b6" stroke-width="1.15"/></svg>
<svg style="position:absolute;left:218px;top:780.2px;" width="18" height="18" viewBox="0 0 18 18"><circle cx="9" cy="9" r="7.4" fill="none" stroke="#2176b6" stroke-width="1.15"/><circle cx="8.7" cy="5.6" r="0.9" fill="#2176b6"/><path d="M7.6 8 L9 8 L9 11.6 Q9 12.6 10.3 12.4" fill="none" stroke="#2176b6" stroke-width="1.15" stroke-linecap="round" stroke-linejoin="round"/></svg>
<span class="t " style="left:255.70px;top:779px;line-height:21px;font-size:13px;letter-spacing:-1.006px;">004</span>
<span class="t " style="left:334.84px;top:779px;line-height:21px;font-size:13px;letter-spacing:-0.102px;">Dodavatel - školení 7</span>
<span class="t " style="left:538.46px;top:779px;line-height:21px;font-size:13px;letter-spacing:0.018px;">12345678</span>
<span class="t " style="left:638.17px;top:779px;line-height:21px;font-size:13px;letter-spacing:-0.073px;">22. 5. 2025 18:25</span>
<span class="t " style="left:778.24px;top:779px;line-height:21px;font-size:13px;letter-spacing:-0.377px;">Otevřena</span>
<svg style="position:absolute;left:1010.1px;top:783.2px;" width="10" height="10" viewBox="0 0 10 10"><path d="M1.35 1.35 L8.65 8.65 M8.65 1.35 L1.35 8.65" stroke="#cc2229" stroke-width="2" fill="none"/></svg>
<svg style="position:absolute;left:1140.2px;top:783.2px;" width="10" height="10" viewBox="0 0 10 10"><path d="M1.35 1.35 L8.65 8.65 M8.65 1.35 L1.35 8.65" stroke="#cc2229" stroke-width="2" fill="none"/></svg>
<svg style="position:absolute;left:1300.9px;top:783.2px;" width="12" height="10" viewBox="0 0 12 10"><path d="M1.5 5.5 L4.6 8.4 L10.5 1.6" stroke="#2eb82e" stroke-width="2" fill="none"/></svg>
<div style="position:absolute;left:181px;top:826px;width:1222px;height:1px;background:#dfdfdf;"></div>
<svg style="position:absolute;left:191px;top:809.2px;" width="20" height="10" viewBox="0 0 20 10"><rect x="2.25" y="3.25" width="3.5" height="3.5" rx="1.5" fill="none" stroke="#2176b6" stroke-width="1.15"/><rect x="8.25" y="3.25" width="3.5" height="3.5" rx="1.5" fill="none" stroke="#2176b6" stroke-width="1.15"/><rect x="14.25" y="3.25" width="3.5" height="3.5" rx="1.5" fill="none" stroke="#2176b6" stroke-width="1.15"/></svg>
<svg style="position:absolute;left:218px;top:805.2px;" width="18" height="18" viewBox="0 0 18 18"><circle cx="9" cy="9" r="7.4" fill="none" stroke="#2176b6" stroke-width="1.15"/><circle cx="8.7" cy="5.6" r="0.9" fill="#2176b6"/><path d="M7.6 8 L9 8 L9 11.6 Q9 12.6 10.3 12.4" fill="none" stroke="#2176b6" stroke-width="1.15" stroke-linecap="round" stroke-linejoin="round"/></svg>
<span class="t " style="left:255.70px;top:804px;line-height:21px;font-size:13px;letter-spacing:-0.912px;">005</span>
<span class="t " style="left:334.84px;top:804px;line-height:21px;font-size:13px;letter-spacing:-0.105px;">Dodavatel - školení 6</span>
<span class="t " style="left:539.15px;top:804px;line-height:21px;font-size:13px;letter-spacing:-0.080px;">45359326</span>
<span class="t " style="left:638.17px;top:804px;line-height:21px;font-size:13px;letter-spacing:-0.073px;">22. 5. 2025 18:23</span>
<span class="t " style="left:778.24px;top:804px;line-height:21px;font-size:13px;letter-spacing:-0.114px;">Otevření zaevidováno</span>
<svg style="position:absolute;left:1010.1px;top:808.2px;" width="10" height="10" viewBox="0 0 10 10"><path d="M1.35 1.35 L8.65 8.65 M8.65 1.35 L1.35 8.65" stroke="#cc2229" stroke-width="2" fill="none"/></svg>
<svg style="position:absolute;left:1139.2px;top:808.2px;" width="12" height="10" viewBox="0 0 12 10"><path d="M1.5 5.5 L4.6 8.4 L10.5 1.6" stroke="#2eb82e" stroke-width="2" fill="none"/></svg>
<svg style="position:absolute;left:1301.9px;top:808.2px;" width="10" height="10" viewBox="0 0 10 10"><path d="M1.35 1.35 L8.65 8.65 M8.65 1.35 L1.35 8.65" stroke="#cc2229" stroke-width="2" fill="none"/></svg>
</div>
</div><div style="position:absolute;left:1208px;top:668px;width:195px;height:34.5px;border:1px solid #e0202c;box-sizing:border-box;"></div>
<div style="position:absolute;left:0px;top:44px;width:1582px;height:32px;background:#fff;box-shadow:0 2px 5px rgba(0,0,0,.18);"></div>
<svg style="position:absolute;left:23.3px;top:51.7px;" width="16" height="16.5" viewBox="0 0 16 16.5"><path d="M0.8 8.2 L8 1.2 L15.2 8.2" fill="none" stroke="#1c74b3" stroke-width="1.7" stroke-linejoin="miter"/><path d="M2.2 8.8 L8 3.9 L13.8 8.8 V15.2 Q13.8 15.8 13.2 15.8 H9.6 V11 H6.4 V15.8 H2.8 Q2.2 15.8 2.2 15.2 Z" fill="#1c74b3"/></svg>
<svg style="position:absolute;left:59px;top:53px;" width="10" height="14" viewBox="0 0 10 14"><path d="M1.6 1.2 L7.6 7 L1.6 12.8" fill="none" stroke="#444" stroke-width="1"/></svg>
<span class="t " style="left:84.35px;top:50px;line-height:20px;font-size:12px;font-weight:700;letter-spacing:0.169px;">N006/25/V00004860 - Inovace v rozvoji řízení do...</span>
<svg style="position:absolute;left:383.2px;top:51px;" width="18" height="18" viewBox="0 0 18 18"><circle cx="9" cy="9" r="7.1" fill="none" stroke="#111" stroke-width="1.25"/><path d="M6.3 6.5 L11.7 11.5 M11.7 6.5 L6.3 11.5" stroke="#111" stroke-width="1.2"/></svg>
<div style="position:absolute;left:0px;top:0px;width:1582px;height:44px;background:#1c74b3;"></div>
<svg style="position:absolute;left:0px;top:0px;" width="80" height="44" viewBox="0 0 80 44"><path d="M25.0 27.6 A15.3 15.3 0 1 1 55.5 17.8 C55.2 22.5 52 27 47.8 29.1 A9.3 9.3 0 1 0 33.9 15.7 C29.5 17.5 26 22.5 25.0 27.6 Z" fill="#fff"/><path d="M25.0 27.6 A15.3 15.3 0 1 1 55.5 17.8 C55.2 22.5 52 27 47.8 29.1 A9.3 9.3 0 1 0 33.9 15.7 C29.5 17.5 26 22.5 25.0 27.6 Z" fill="#fff" transform="rotate(180 41 22.5)"/><path d="M55.9 17.6 C55.6 22.7 52.3 27.3 47.6 29.5 M33.7 15.3 C29.1 17.3 25.6 22.3 24.6 27.8" fill="none" stroke="#1c74b3" stroke-width="0.9"/><path d="M55.9 17.6 C55.6 22.7 52.3 27.3 47.6 29.5 M33.7 15.3 C29.1 17.3 25.6 22.3 24.6 27.8" fill="none" stroke="#1c74b3" stroke-width="0.9" transform="rotate(180 41 22.5)"/><circle cx="41" cy="22.2" r="9" fill="#1c74b3"/></svg>
<span class="t " style="left:65.47px;top:5px;line-height:33px;font-size:24.5px;font-weight:700;color:#fff;letter-spacing:2.687px;transform:scaleX(0.92);transform-origin:0 0;-webkit-text-stroke:0.35px #fff;">NEN</span>
<span class="t " style="left:122.36px;top:24px;line-height:22px;font-size:14px;color:#fff;letter-spacing:-0.241px;">Zadavatel</span>
<span class="t " style="left:546.61px;top:9px;line-height:27px;font-size:19px;font-weight:700;color:#fff;letter-spacing:0.618px;">TESTOVACÍ PROSTŘEDÍ</span>
<svg style="position:absolute;left:1138px;top:13.5px;" width="17" height="17" viewBox="0 0 17 17"><circle cx="8.5" cy="8.5" r="7" fill="none" stroke="#fff" stroke-width="1.4"/><path d="M8.5 4.4 V8.8 L11.2 11.4" fill="none" stroke="#fff" stroke-width="1.4" stroke-linecap="round"/></svg>
<span class="t " style="left:1162.77px;top:12px;line-height:21px;font-size:13px;color:#fff;letter-spacing:-0.032px;">22:01:04</span>
<div style="position:absolute;left:1224px;top:8px;width:2px;height:29px;background:#fff;"></div>
<svg style="position:absolute;left:1238px;top:13.5px;" width="17" height="17" viewBox="0 0 17 17"><path d="M8 3.2 H2.6 Q1.2 3.2 1.2 4.6 V14.4 Q1.2 15.8 2.6 15.8 H12.2 Q13.6 15.8 13.6 14.4 V9" fill="none" stroke="#fff" stroke-width="1.4"/><path d="M6.3 11 L6.8 8.2 L13 1.6 Q13.8 0.9 14.8 1.8 Q15.8 2.8 15 3.6 L8.9 10.3 Z" fill="none" stroke="#fff" stroke-width="1.3" stroke-linejoin="round"/></svg>
<span class="t " style="left:1262.96px;top:10px;line-height:23px;font-size:16px;font-weight:700;color:#fff;letter-spacing:-0.432px;">Založit VZ</span>
<div style="position:absolute;left:1346px;top:8px;width:2px;height:29px;background:#fff;"></div>
<div style="position:absolute;left:1368px;top:14.95px;width:16.2px;height:2.5px;background:#fff;border-radius:1.2px;"></div>
<div style="position:absolute;left:1368px;top:20.45px;width:16.2px;height:2.5px;background:#fff;border-radius:1.2px;"></div>
<div style="position:absolute;left:1368px;top:25.95px;width:16.2px;height:2.5px;background:#fff;border-radius:1.2px;"></div>
<svg style="position:absolute;left:1400px;top:0px;" width="44" height="44" viewBox="1400 0 44 44"><rect x="1415.7" y="16.5" width="16.1" height="13.4" rx="1.6" fill="#fff"/><rect x="1418.1" y="20.3" width="11.4" height="7.5" fill="#1c74b3"/><path d="M1420.1 14 V17.5 M1427.5 14 V17.5" stroke="#fff" stroke-width="1.5"/><rect x="1419.3" y="21.1" width="1.7" height="1.5" fill="#fff"/><rect x="1423.0" y="21.1" width="1.7" height="1.5" fill="#fff"/><rect x="1426.7" y="21.1" width="1.7" height="1.5" fill="#fff"/><rect x="1419.3" y="23.5" width="1.7" height="1.5" fill="#fff"/><rect x="1423.0" y="23.5" width="1.7" height="1.5" fill="#fff"/><rect x="1426.7" y="23.5" width="1.7" height="1.5" fill="#fff"/><rect x="1419.3" y="25.9" width="1.7" height="1.5" fill="#fff"/><rect x="1423.0" y="25.9" width="1.7" height="1.5" fill="#fff"/><rect x="1426.7" y="25.9" width="1.7" height="1.5" fill="#fff"/></svg>
<svg style="position:absolute;left:1450px;top:0px;" width="44" height="44" viewBox="1450 0 44 44"><path d="M1471.55 14.3 V22 M1468.3 19 L1471.55 22.2 L1474.8 19" fill="none" stroke="#fff" stroke-width="1.3"/><path d="M1465.8 24.3 H1467.6 Q1468.6 26.5 1471.6 26.5 Q1474.6 26.5 1475.6 24.3 H1477.6 Q1478.8 24.3 1478.8 25.5 V28 Q1478.8 29.2 1477.6 29.2 H1465.8 Q1464.6 29.2 1464.6 28 V25.5 Q1464.6 24.3 1465.8 24.3 Z" fill="none" stroke="#fff" stroke-width="1.4" stroke-linejoin="round"/></svg>
<div style="position:absolute;left:1482px;top:8px;width:10px;height:10px;background:#c8282c;border-radius:50%;"></div>
<svg style="position:absolute;left:1511px;top:16px;" width="17.5" height="12" viewBox="0 0 17.5 12"><rect x="0.2" y="0.2" width="16.8" height="11.4" rx="1.2" fill="#fff"/><path d="M0.8 0.9 L8.6 7.2 L16.4 0.9" fill="none" stroke="#1c74b3" stroke-width="1"/></svg>
<div style="position:absolute;left:1530px;top:8px;width:10px;height:10px;background:#c8282c;border-radius:50%;"></div>
<svg style="position:absolute;left:1559.5px;top:13.5px;" width="16" height="17" viewBox="0 0 16 17"><circle cx="8" cy="4.7" r="3.6" fill="none" stroke="#fff" stroke-width="1.3"/><path d="M0.9 16.4 Q0.9 9.6 8 9.6 Q15.1 9.6 15.1 16.4" fill="none" stroke="#fff" stroke-width="1.3"/></svg>
</body></html>
